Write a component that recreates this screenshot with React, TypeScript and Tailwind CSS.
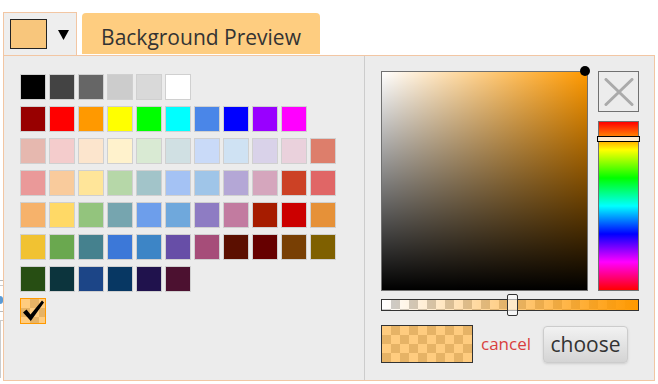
import React from "react";

const topRows: string[][] = [
  ["#000000", "#434343", "#666666", "#cccccc", "#d9d9d9", "#ffffff"],
  ["#980000", "#ff0000", "#ff9900", "#ffff00", "#00ff00", "#00ffff", "#4a86e8", "#0000ff", "#9900ff", "#ff00ff"],
];

const gridColors = [
  "#e6b8af", "#f4cccc", "#fce5cd", "#fff2cc", "#d9ead3", "#d0e0e3", "#c9daf8", "#cfe2f3", "#d9d2e9", "#ead1dc",
  "#dd7e6b", "#ea9999", "#f9cb9c", "#ffe599", "#b6d7a8", "#a2c4c9", "#a4c2f4", "#9fc5e8", "#b4a7d6", "#d5a6bd",
  "#cc4125", "#e06666", "#f6b26b", "#ffd966", "#93c47d", "#76a5af", "#6d9eeb", "#6fa8dc", "#8e7cc3", "#c27ba0",
  "#a61c00", "#cc0000", "#e69138", "#f1c232", "#6aa84f", "#45818e", "#3c78d8", "#3d85c6", "#674ea7", "#a64d79",
  "#5b0f00", "#660000", "#783f04", "#7f6000", "#274e13", "#0c343d", "#1c4587", "#073763", "#20124d", "#4c1130",
];

// split the long list into rows of 11, like the wrapping palette
const gridRows: string[][] = [];
for (let i = 0; i < gridColors.length; i += 11) gridRows.push(gridColors.slice(i, i + 11));

const checker =
  "bg-[conic-gradient(#cccccc_25%,#ffffff_0_50%,#cccccc_0_75%,#ffffff_0)] [background-size:18px_18px]";

function Swatch({ color }: { color: string }) {
  return <span className="block w-[26px] h-[26px] border border-[#d0d0d0]" style={{ backgroundColor: color }} />;
}

function SwatchRow({ colors }: { colors: string[] }) {
  return (
    <div className="flex gap-[3px]">
      {colors.map((c, i) => (
        <Swatch key={i} color={c} />
      ))}
    </div>
  );
}

export default function App() {
  return (
    <div className="relative w-[658px] h-[384px] bg-white overflow-hidden" style={{ fontFamily: '"Open Sans", "Noto Sans", sans-serif' }}>
      {/* page content peeking out behind the picker */}
      <div className="absolute left-0 top-[280px] w-[3px] flex flex-col">
        <div className="h-[1px] bg-[#bbb]" />
        <div className="h-[4px]" />
        <div className="h-[1px] bg-[#ccc]" />
        <div className="h-[10px]" />
        <div className="h-[8px] bg-[#5b9bd5] rounded-r" />
        <div className="h-[7px]" />
        <div className="h-[1px] bg-[#bbb]" />
        <div className="h-[8px]" />
        <div className="h-[58px] border-l border-t border-[#ccc]" />
      </div>

      {/* replacer + preview tab */}
      <div className="flex items-start pt-[12px] pl-[3px] h-[55px]">
        <div className="w-[74px] h-[43px] border border-b-0 border-[#f2c6a3] bg-[#eeeeee] flex items-start pt-[6px] pl-[6px]">
          <div className="w-[37px] h-[30px] border border-[#222] bg-[#f8c67c]" />
          <svg width="11" height="11" viewBox="0 0 11 11" className="ml-[11px] mt-[11px]">
            <polygon points="0,0 11,0 5.5,10" fill="#000" />
          </svg>
        </div>
        <div className="ml-[5px] mt-[1px] w-[238px] h-[41px] bg-[#fecd80] rounded-t-[4px] text-center text-[21px] leading-[24px] pt-[12px] text-[#333]">
          Background Preview
        </div>
      </div>

      {/* picker container */}
      <div className="ml-[3px] w-[652px] h-[326px] border border-[#f2c6a3] bg-[#ececec] flex">
        {/* palette */}
        <div className="w-[361px] border-r border-[#cccccc] pt-[18px] pl-[16px] flex flex-col gap-[6px]">
          {topRows.map((r, i) => (
            <SwatchRow key={"t" + i} colors={r} />
          ))}
          {gridRows.map((r, i) => (
            <SwatchRow key={"g" + i} colors={r} />
          ))}
          <div className="relative w-[26px] h-[26px] border border-[#ff9900]">
            <div className={`absolute inset-0 ${checker}`} />
            <div className="absolute inset-0 bg-[#ff9900]/50" />
            <svg width="24" height="24" viewBox="0 0 24 24" className="absolute left-0 top-0">
              <path d="M2 13.5 L5.5 10.5 L9.5 15.5 L21 1.5 L23 3.5 L9.8 22 Z" fill="#000" />
            </svg>
          </div>
        </div>

        {/* picker */}
        <div className="flex-1 pt-[15px] pl-[16px] pr-[15px]">
          <div className="flex gap-[10px]">
            <div className="relative w-[207px] h-[220px] border border-[#707070] bg-[#ff9900]">
              <div className="absolute inset-0 bg-[linear-gradient(to_right,#ffffff,rgba(255,255,255,0))]" />
              <div className="absolute inset-0 bg-[linear-gradient(to_bottom,rgba(0,0,0,0),#000000)]" />
              <div className="absolute left-[198px] top-[-6px] w-[10px] h-[10px] rounded-full bg-black" />
            </div>
            <div className="w-[41px] flex flex-col gap-[9px]">
              <div className="h-[41px] border border-[#707070] bg-[#ececec] flex items-center justify-center">
                <svg width="30" height="28" viewBox="0 0 30 28">
                  <path d="M2 1.5 L28 26.5 M28 1.5 L2 26.5" stroke="#aaaaaa" strokeWidth="3" strokeLinecap="round" />
                </svg>
              </div>
              <div className="relative h-[170px] border border-[#707070] bg-[linear-gradient(to_bottom,#ff0000,#ffff00,#00ff00,#00ffff,#0000ff,#ff00ff,#ff0000)]">
                <div className="absolute left-[-2px] right-[-2px] top-[14px] h-[6px] border border-black bg-white/80" />
              </div>
            </div>
          </div>

          {/* alpha */}
          <div className={`relative mt-[8px] w-[258px] h-[12px] border border-[#333] ${checker} [background-size:12px_10px]`}>
            <div className="absolute inset-0 bg-[linear-gradient(to_right,rgba(255,153,0,0),#ff9900)]" />
            <div className="absolute left-[125px] top-[-6px] w-[11px] h-[22px] border border-[#333] bg-white/60 rounded-[2px]" />
          </div>

          {/* preview + buttons */}
          <div className="mt-[14px] flex items-center">
            <div className={`relative w-[92px] h-[38px] border border-[#333] ${checker}`}>
              <div className="absolute inset-0 bg-[#ff9900]/50" />
            </div>
            <span className="ml-[8px] text-[17px] leading-[20px] text-[#d93f3f]">cancel</span>
            <button className="ml-[12px] w-[85px] h-[37px] border border-[#cccccc] rounded-[4px] bg-[linear-gradient(to_bottom,#f2f2f2,#d4d4d4)] text-[21px] leading-[24px] text-[#333] shadow-sm">
              choose
            </button>
          </div>
        </div>
      </div>
    </div>
  );
}
